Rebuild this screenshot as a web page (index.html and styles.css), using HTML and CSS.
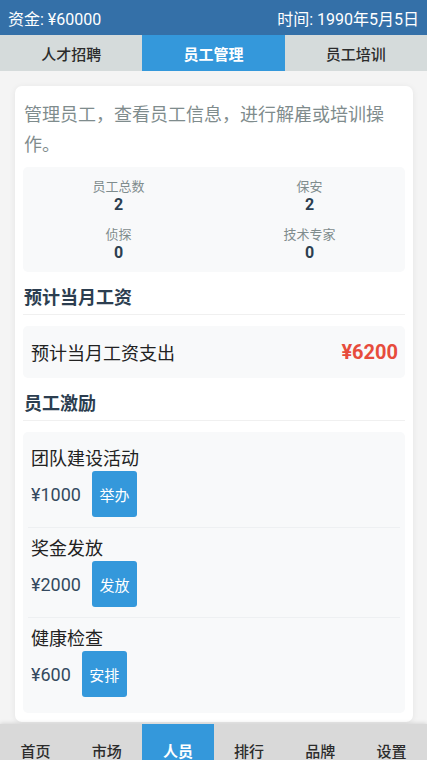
FILE: index.html
```html
<!DOCTYPE html>
<html lang="zh-CN">
<head>
  <meta charset="UTF-8" />
  <meta name="viewport" content="width=device-width, initial-scale=1.0"/>
  <title>员工管理</title>
  <link rel="stylesheet" href="styles.css">
</head>
<body>
  <header class="top-bar">
    <span>资金: ¥60000</span>
    <span>时间: 1990年5月5日</span>
  </header>

  <nav class="tabs">
    <div class="tab">人才招聘</div>
    <div class="tab active">员工管理</div>
    <div class="tab">员工培训</div>
  </nav>

  <main class="content">
    <section class="card">
      <p class="intro">管理员工，查看员工信息，进行解雇或培训操作。</p>

      <div class="stats">
        <div class="stat">
          <div class="stat-label">员工总数</div>
          <div class="stat-value">2</div>
        </div>
        <div class="stat">
          <div class="stat-label">保安</div>
          <div class="stat-value">2</div>
        </div>
        <div class="stat">
          <div class="stat-label">侦探</div>
          <div class="stat-value">0</div>
        </div>
        <div class="stat">
          <div class="stat-label">技术专家</div>
          <div class="stat-value">0</div>
        </div>
      </div>

      <h3 class="section-title">预计当月工资</h3>
      <div class="salary-box">
        <span>预计当月工资支出</span>
        <span class="salary-amount">¥6200</span>
      </div>

      <h3 class="section-title">员工激励</h3>
      <div class="incentives">
        <div class="incentive">
          <div class="incentive-name">团队建设活动</div>
          <div class="incentive-row">
            <span class="price">¥1000</span>
            <button class="action-btn">举办</button>
          </div>
        </div>
        <div class="incentive">
          <div class="incentive-name">奖金发放</div>
          <div class="incentive-row">
            <span class="price">¥2000</span>
            <button class="action-btn">发放</button>
          </div>
        </div>
        <div class="incentive">
          <div class="incentive-name">健康检查</div>
          <div class="incentive-row">
            <span class="price">¥600</span>
            <button class="action-btn">安排</button>
          </div>
        </div>
      </div>
    </section>
  </main>

  <footer class="bottom-nav">
    <div class="nav-item">首页</div>
    <div class="nav-item">市场</div>
    <div class="nav-item active">人员</div>
    <div class="nav-item">排行</div>
    <div class="nav-item">品牌</div>
    <div class="nav-item">设置</div>
  </footer>
</body>
</html>
```

FILE: styles.css
```css
body {
  margin: 0;
  font-family: Roboto, "Noto Sans CJK SC", sans-serif;
  background-color: #f4f4f4;
  color: #333;
  display: flex;
  flex-direction: column;
  height: 100vh;
  overflow: hidden;
}

.top-bar {
  background-color: #3470a8;
  color: white;
  height: 35px;
  padding: 0 8px;
  display: flex;
  justify-content: space-between;
  align-items: center;
  font-size: 16px;
  flex-shrink: 0;
}

.tabs {
  display: flex;
  height: 36px;
  background-color: #d5dbdb;
  flex-shrink: 0;
}

.tab {
  flex: 1;
  display: flex;
  justify-content: center;
  align-items: center;
  font-size: 15px;
  font-weight: 500;
  color: #2c2c2c;
}

.tab.active {
  background-color: #3498db;
  color: white;
  font-weight: bold;
}

.content {
  flex: 1;
  overflow: hidden;
  padding: 15px 14px 0 15px;
}

.card {
  background-color: white;
  border-radius: 7px;
  padding: 8px 8px 9px;
  box-shadow: 0 1px 6px rgba(0, 0, 0, 0.07);
}

.intro {
  margin: 6px 12px 7px 1px;
  font-size: 18px;
  line-height: 30px;
  color: #7f8c8d;
}

.stats {
  display: grid;
  grid-template-columns: 1fr 1fr;
  row-gap: 12px;
  padding: 11px 0 10px;
  background-color: #f8f9fa;
  border-radius: 5px;
  text-align: center;
}

.stat-label {
  font-size: 13px;
  line-height: 17px;
  color: #7f8c8d;
}

.stat-value {
  font-size: 16px;
  line-height: 19px;
  font-weight: bold;
  color: #2c3e50;
}

.section-title {
  margin: 15px 0 11px;
  padding: 0 1px 5px;
  font-size: 18px;
  line-height: 22px;
  color: #2c3e50;
  border-bottom: 1px solid #f0f0f0;
}

.salary-box {
  display: flex;
  justify-content: space-between;
  align-items: center;
  height: 52px;
  padding: 0 7px 0 8px;
  background-color: #f8f9fa;
  border-radius: 5px;
  font-size: 18px;
  color: #222;
}

.salary-amount {
  font-size: 20px;
  font-weight: bold;
  color: #e74c3c;
}

.incentives {
  background-color: #f8f9fa;
  border-radius: 5px;
  padding: 6px 5px;
}

.incentive {
  padding: 10px 3px;
  border-bottom: 1px solid #eef0f2;
}

.incentive:last-child {
  border-bottom: none;
}

.incentive-name {
  font-size: 18px;
  line-height: 22px;
  color: #222;
  margin-bottom: 1px;
}

.incentive-row {
  display: flex;
  align-items: center;
  gap: 11px;
}

.price {
  font-size: 18px;
  color: #34495e;
}

.action-btn {
  width: 45px;
  height: 46px;
  padding: 0;
  border: none;
  border-radius: 3px;
  background-color: #3498db;
  color: white;
  font-family: inherit;
  font-size: 15px;
  cursor: pointer;
}

.bottom-nav {
  display: flex;
  height: 36px;
  background-color: #d9d9d9;
  box-shadow: 0 -1px 4px rgba(0, 0, 0, 0.12);
  flex-shrink: 0;
}

.nav-item {
  flex: 1;
  overflow: hidden;
  padding-top: 17px;
  text-align: center;
  font-size: 15px;
  line-height: 22px;
  font-weight: 500;
  color: #2c2c2c;
}

.nav-item.active {
  background-color: #3498db;
  color: white;
  font-weight: bold;
}
```
